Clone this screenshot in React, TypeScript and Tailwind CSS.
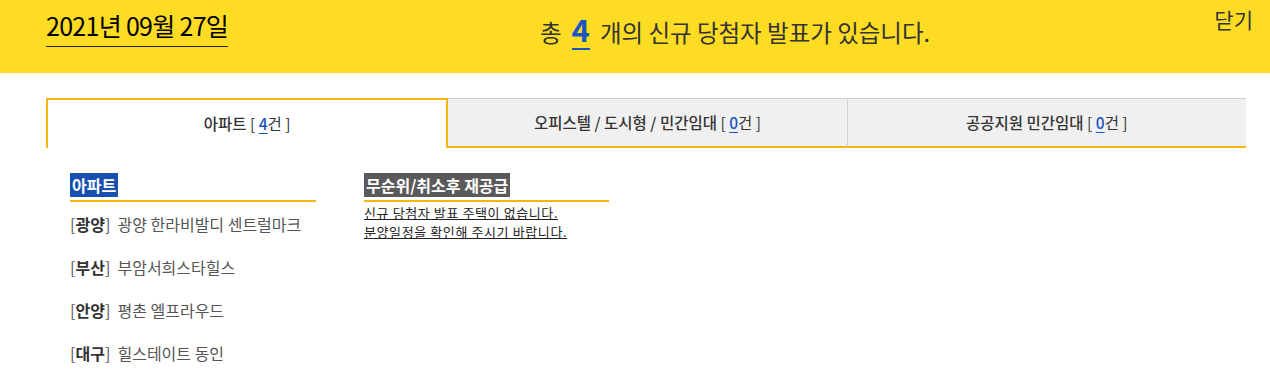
const font = { fontFamily: '"Noto Sans CJK KR", "Noto Sans", sans-serif' };

const items = [
  { region: '광양', name: '광양 한라비발디 센트럴마크' },
  { region: '부산', name: '부암서희스타힐스' },
  { region: '안양', name: '평촌 엘프라우드' },
  { region: '대구', name: '힐스테이트 동인' },
];

const Count = ({ n }: { n: number }) => (
  <>
    [ <span className="text-[#1a56c2] font-medium underline underline-offset-[3px]">{n}</span>건 ]
  </>
);

export default function App() {
  return (
    <div className="w-[1270px] h-[386px] bg-white overflow-hidden" style={font}>
      {/* header */}
      <div className="h-[73px] bg-[#ffdc24] flex items-start px-[46px] relative">
        <div className="pt-[8px]">
          <div className="text-[25px] leading-[34px] text-black tracking-[-0.7px] border-b border-[#222] pb-[4px]">
            2021년 09월 27일
          </div>
        </div>
        <div className="flex-1 flex justify-center pt-[10px] pl-[18px]">
          <div className="text-[23.5px] leading-[40px] text-[#333] flex items-baseline">
            총
            <span className="mx-[10px] text-[31px] font-bold text-[#1a56c2] border-b-2 border-[#1a56c2] leading-[38px]">4</span>
            개의 신규 당첨자 발표가 있습니다.
          </div>
        </div>
        <div className="absolute right-[17px] top-[4px] text-[21px] leading-[30px] text-[#333]">닫기</div>
      </div>

      {/* tabs */}
      <div className="ml-[46px] w-[1200px] mt-[25px] flex h-[50px] text-[15.5px] text-[#333]">
        <div className="flex-1 flex items-center justify-center border-2 border-b-0 border-[#f8b50c] font-medium">
          아파트&nbsp;<span className="font-normal"><Count n={4} /></span>
        </div>
        <div className="flex-1 flex items-center justify-center bg-[#f0f0f0] border-t border-[#d0d0d0] border-b-2 border-b-[#f8b50c] font-medium">
          오피스텔 / 도시형 / 민간임대&nbsp;<span className="font-normal"><Count n={0} /></span>
        </div>
        <div className="flex-1 flex items-center justify-center bg-[#f0f0f0] border-t border-l border-[#d0d0d0] border-b-2 border-b-[#f8b50c] font-medium">
          공공지원 민간임대&nbsp;<span className="font-normal"><Count n={0} /></span>
        </div>
      </div>

      {/* content */}
      <div className="flex pl-[70px] pt-[25px] gap-[48px]">
        <div className="w-[246px]">
          <div className="border-b-2 border-[#f8b50c] pb-[3px]">
            <span className="inline-block bg-[#1a4fb2] text-white font-bold text-[16px] leading-[24px] px-[2px]">아파트</span>
          </div>
          <ul className="mt-[5px] text-[16px] text-[#555]">
            {items.map((it) => (
              <li key={it.region} className="h-[43px] leading-[34px]">
                [<span className="font-bold text-[#333]">{it.region}</span>]&nbsp; {it.name}
              </li>
            ))}
          </ul>
        </div>
        <div className="w-[245px]">
          <div className="border-b-2 border-[#f8b50c] pb-[3px]">
            <span className="inline-block bg-[#5a5a5a] text-white font-bold text-[16px] leading-[24px] px-[2px]">무순위/취소후 재공급</span>
          </div>
          <div className="text-[13px] leading-[19px] tracking-[0.6px] text-[#222] underline pt-[1px]">
            <div>신규 당첨자 발표 주택이 없습니다.</div>
            <div>분양일정을 확인해 주시기 바랍니다.</div>
          </div>
        </div>
      </div>
    </div>
  );
}
